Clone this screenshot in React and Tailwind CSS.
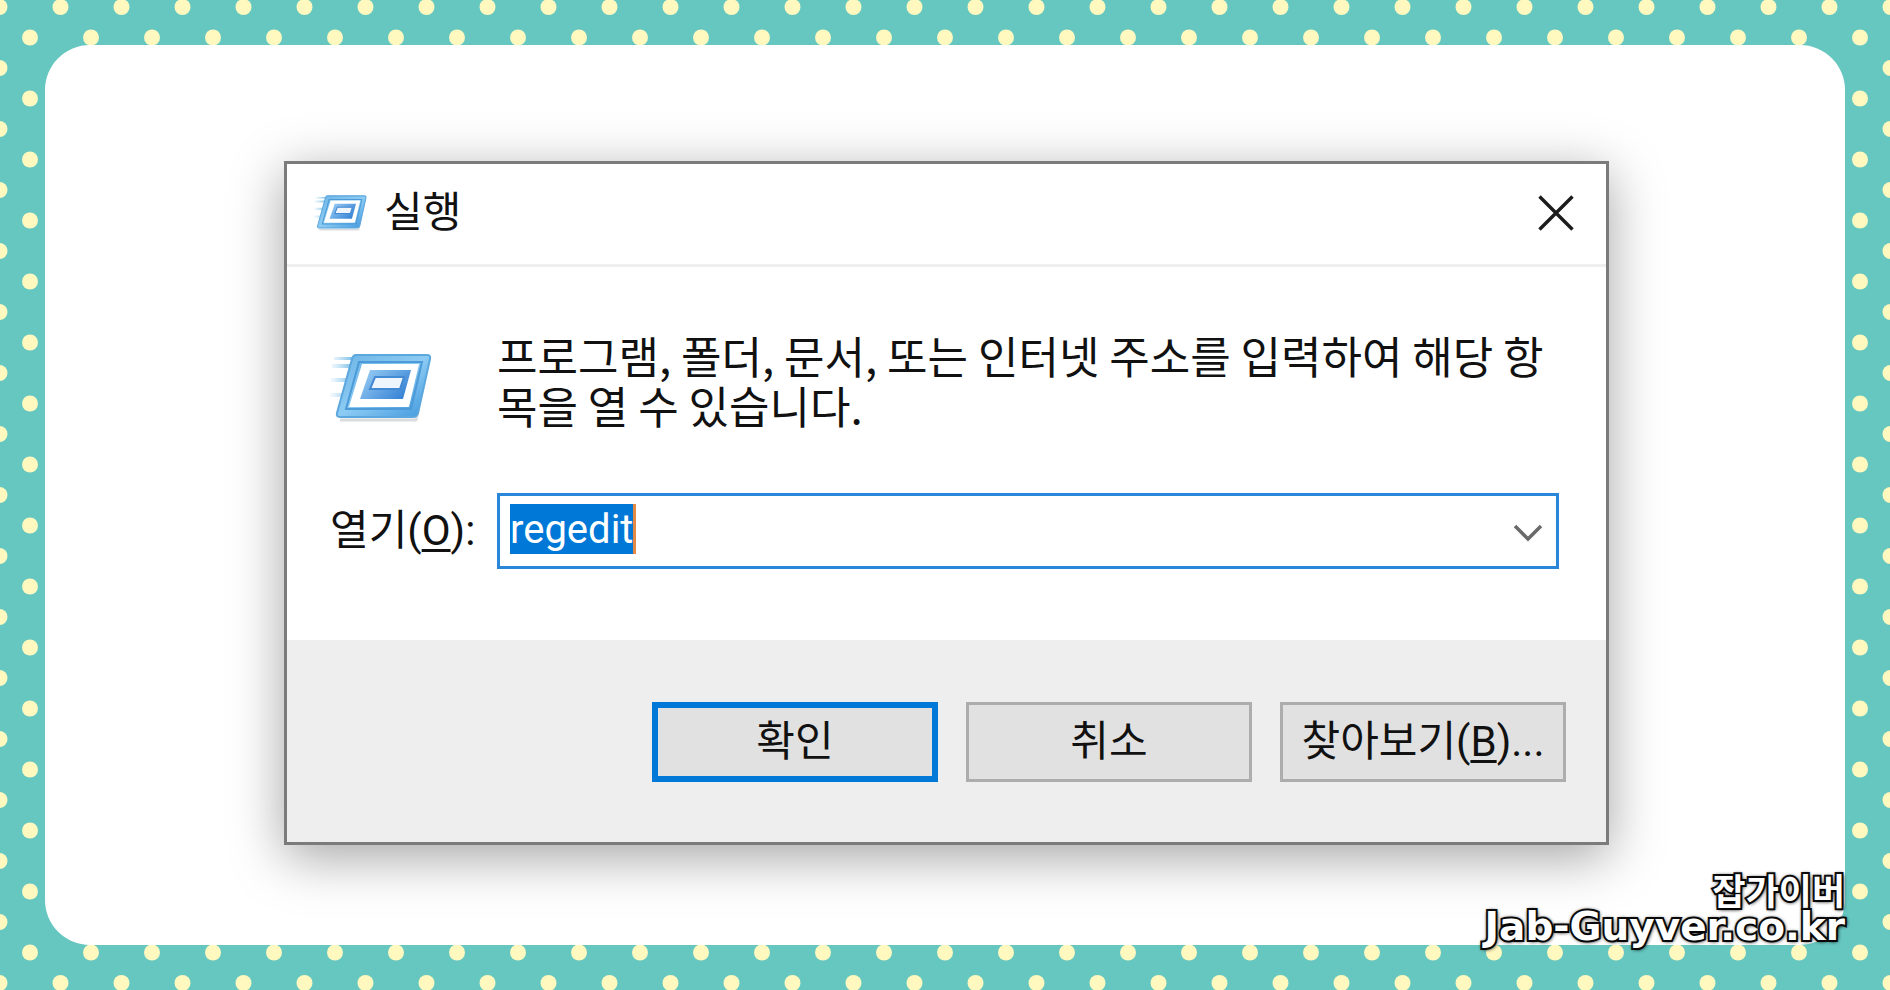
import { useState } from 'react'

const FONT = "font-[Roboto,'Noto_Sans_CJK_KR',sans-serif]"

const BUTTON = 'h-20 w-[286px] bg-[#e1e1e1] text-center text-[42px] leading-none whitespace-nowrap'

export default function App() {
  const [command, setCommand] = useState('regedit')

  return (
    <div className="relative flex min-h-screen bg-[#66c7c0] p-[45px]">
      <Dots />
      <main className="relative flex flex-1 flex-col justify-center rounded-[45px] bg-white pt-4 pr-[236px] pl-[239px]">
        <RunDialog command={command} onChange={setCommand} />
        <Watermark />
      </main>
    </div>
  )
}

function RunDialog({ command, onChange }) {
  return (
    <section
      role="dialog"
      aria-labelledby="run-title"
      className={`${FONT} border-[3px] border-[#7b7b7b] bg-white text-[#111] shadow-[0_12px_50px_rgba(0,0,0,0.36)]`}
    >
      <header className="flex h-[103px] items-center justify-between border-b-[3px] border-[#efefef] pr-8 pb-[3px] pl-[27px]">
        <div className="flex items-center gap-4">
          <RunIcon className="h-10 w-[54px]" />
          <h1 id="run-title" className="text-[42px] leading-none">실행</h1>
        </div>
        <button type="button" aria-label="닫기">
          <svg viewBox="0 0 36 36" className="h-9 w-9" fill="none" stroke="#1c1c1c" strokeWidth="3.4">
            <path d="M1.500 1.500L34.500 34.500M34.500 1.500L1.500 34.500" />
          </svg>
        </button>
      </header>

      <div className="grid grid-cols-[167px_1fr] gap-y-[63px] pt-[63px] pr-[47px] pb-[71px] pl-[43px]">
        <RunIcon className="mt-5 h-[76px] w-[104px]" />
        <p className="font-['Noto_Sans_CJK_KR',sans-serif] text-[44px] leading-[50px]">
          프로그램, 폴더, 문서, 또는 인터넷 주소를 입력하여 해당 항목을 열 수 있습니다.
        </p>
        <label htmlFor="command" className="self-center text-[42px] leading-none whitespace-nowrap">
          열기(<u className="underline decoration-[3px] underline-offset-4">O</u>):
        </label>
        <div className="flex h-[76px] items-start justify-between border-[3px] border-[#2a86d8] pt-2 pr-3 pl-[10px]">
          <input
            id="command"
            type="text"
            value={command}
            onChange={(e) => onChange(e.target.value)}
            className="field-sizing-content h-[50px] border-r-[3px] border-[#e58a45] bg-[#0078d7] text-[40px] leading-none text-white outline-none"
          />
          <button type="button" aria-label="목록 열기" className="self-center pb-1">
            <svg viewBox="0 0 32 20" className="h-5 w-8" fill="none" stroke="#6a6a6a" strokeWidth="3.500">
              <path d="M3 3L16 16L29 3" />
            </svg>
          </button>
        </div>
      </div>

      <footer className="flex justify-end gap-7 bg-[#eeeeee] px-10 pt-[62px] pb-[60px]">
        <button type="button" className={`${BUTTON} border-[6px] border-[#0078d7]`}>확인</button>
        <button type="button" className={`${BUTTON} border-[3px] border-[#adadad]`}>취소</button>
        <button type="button" className={`${BUTTON} border-[3px] border-[#adadad]`}>
          찾아보기(<u className="underline decoration-[3px] underline-offset-4">B</u>)...
        </button>
      </footer>
    </section>
  )
}

function Watermark() {
  return (
    <div className="absolute right-0 bottom-0 text-right font-['DejaVu_Sans','Noto_Sans_CJK_KR',sans-serif] font-bold text-white [paint-order:stroke_fill] [-webkit-text-stroke:4px_#111] [text-shadow:0_0_4px_#000,1px_1px_4px_#000]">
      <p className="text-[36px] leading-8">잡가이버</p>
      <p className="text-[39px] leading-9">Jab-Guyver.co.kr</p>
    </div>
  )
}

function Dots() {
  return (
    <svg className="absolute inset-0 h-full w-full" aria-hidden="true">
      <defs>
        <pattern id="dots" width="61" height="61" patternUnits="userSpaceOnUse" x="-16" y="-8">
          <circle cx="15.500" cy="15" r="8" fill="#fff8bf" />
          <circle cx="46" cy="45.500" r="8" fill="#fff8bf" />
        </pattern>
      </defs>
      <rect width="100%" height="100%" fill="url(#dots)" />
    </svg>
  )
}

function RunIcon({ className = '' }) {
  return (
    <svg viewBox="0 0 104 76" className={className} fill="none" aria-hidden="true">
      <defs>
        <linearGradient id="frame" x1="0" y1="0" x2="1" y2="1">
          <stop offset="0" stopColor="#6db4e6" />
          <stop offset="0.5" stopColor="#8ccbf3" />
          <stop offset="1" stopColor="#3f97dd" />
        </linearGradient>
        <linearGradient id="screen" x1="0" y1="0" x2="1" y2="0.6">
          <stop offset="0" stopColor="#9fd2f6" />
          <stop offset="1" stopColor="#3b86d6" />
        </linearGradient>
        <linearGradient id="trail" x1="0" y1="0" x2="1" y2="0">
          <stop offset="0" stopColor="#9ed3f3" stopOpacity="0.1" />
          <stop offset="1" stopColor="#6fb7e4" />
        </linearGradient>
      </defs>
      <path d="M4 7H24V10H4ZM2 14H22V18H2ZM1 28H20V32H1ZM0 43H16V47H0Z" fill="url(#trail)" />
      <path d="M10 70H86L99 10" stroke="#d9dde0" strokeWidth="3" strokeLinejoin="round" />
      <path d="M26 5H97Q101 5 100 9L88 63Q87 67 83 67H10Q6 67 7 63L22 9Q23 5 26 5Z" fill="url(#frame)" stroke="#5ba7de" strokeWidth="2" />
      <path d="M29 12H92L81 59H16Z" fill="url(#frame)" stroke="#4c9bd8" strokeWidth="2" />
      <path d="M32 14H89L79 57H19Z" fill="#fff" />
      <path d="M40 20H81L73 49H30Z" fill="url(#screen)" />
      <path d="M45 27H74L70 39H40Z" fill="#eef5fc" stroke="#4389d3" strokeWidth="2" />
    </svg>
  )
}
